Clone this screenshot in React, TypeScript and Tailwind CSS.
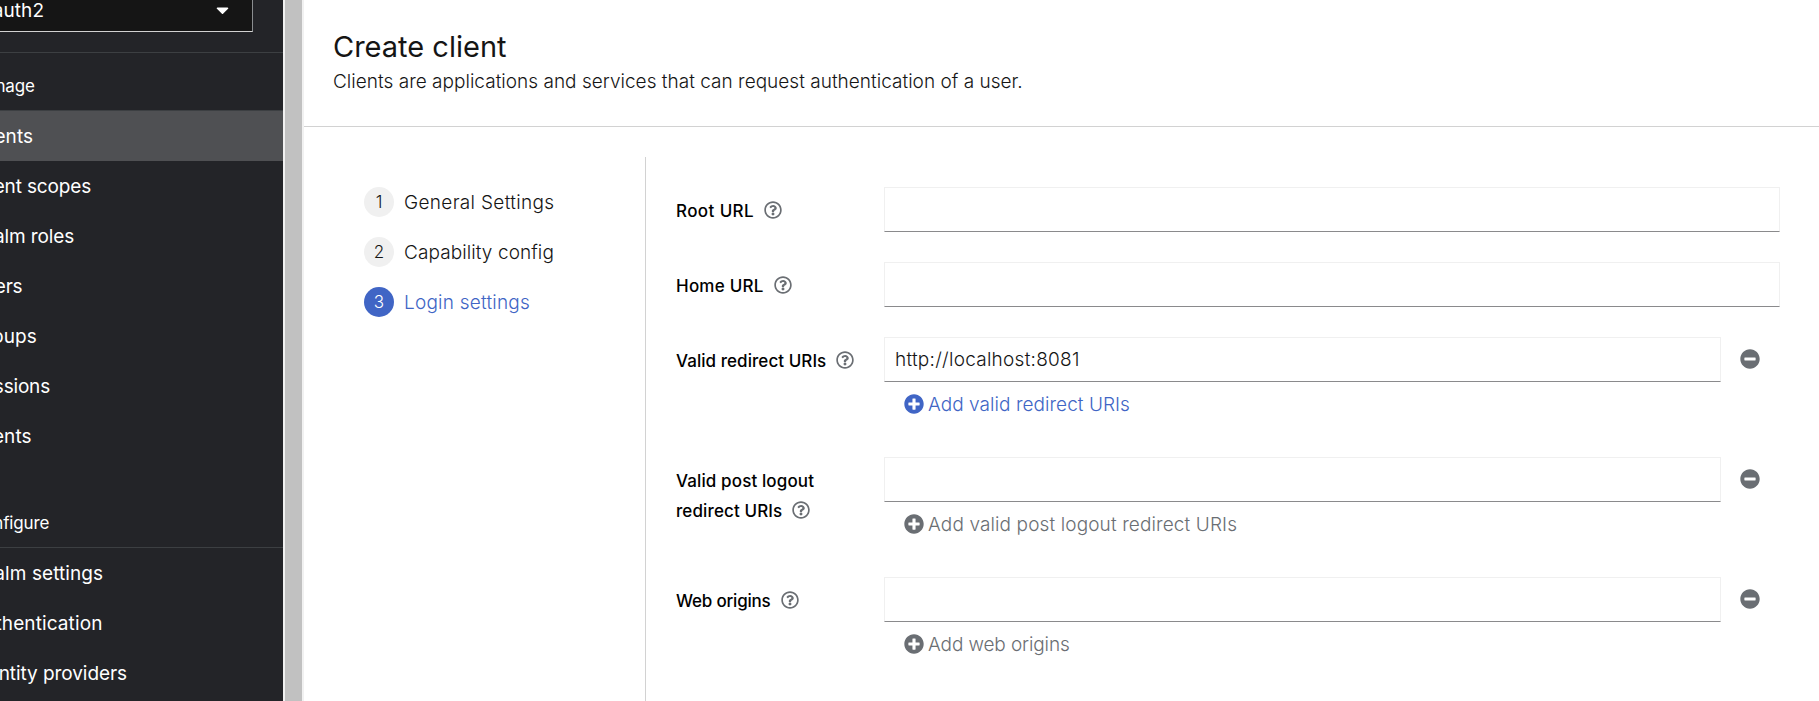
import type { ReactNode } from 'react';
import { FaCaretDown, FaMinusCircle, FaPlusCircle, FaRegQuestionCircle } from 'react-icons/fa';

function NavItem({ label, active = false, tracking = '' }: { label: string; active?: boolean; tracking?: string }) {
  return (
    <a
      className={`flex h-[50px] items-center pt-[2px] pl-[30px] text-[19px] whitespace-nowrap text-white ${tracking} ${active ? 'bg-[#4f5053]' : ''}`}
    >
      {label}
    </a>
  );
}

function NavTitle({ label, tracking = '' }: { label: string; tracking?: string }) {
  return (
    <h2 className={`flex h-[58px] items-end border-b border-[#3c3f42] pb-[11px] pl-[30px] text-[17px] leading-[26px] text-white ${tracking}`}>
      {label}
    </h2>
  );
}

function Sidebar() {
  return (
    <aside className="w-[283px] shrink-0 overflow-hidden bg-[#232428]">
      <div className="-ml-[59px] flex w-[342px] flex-col">
        <div className="h-[53px] border-b border-[#3c3f42]">
          <button className="ml-[30px] flex h-8 w-[282px] items-center justify-between border-r border-b border-r-[#8a8d90] border-b-[#d2d2d2] bg-[#151515] pr-[22px] pb-[10px] pl-[10px] text-[19px] leading-5 text-white">
            <span className="tracking-[0.1px]">oauth2</span>
            <FaCaretDown className="mb-[2px] h-5 w-[15px]" />
          </button>
        </div>
        <NavTitle label="Manage" tracking="tracking-[-0.2px]" />
        <nav>
          <NavItem label="Clients" active tracking="tracking-[0.1px]" />
          <NavItem label="Client scopes" tracking="tracking-[-0.14px]" />
          <NavItem label="Realm roles" tracking="tracking-[-0.12px]" />
          <NavItem label="Users" tracking="tracking-[-0.2px]" />
          <NavItem label="Groups" tracking="tracking-[0.1px]" />
          <NavItem label="Sessions" tracking="tracking-[-0.2px]" />
          <NavItem label="Events" tracking="tracking-[0.1px]" />
        </nav>
        <div className="pt-[29px]">
          <NavTitle label="Configure" tracking="tracking-[-0.15px]" />
          <NavItem label="Realm settings" tracking="tracking-[0.08px]" />
          <NavItem label="Authentication" tracking="tracking-[0.1px]" />
          <NavItem label="Identity providers" tracking="tracking-[-0.06px]" />
        </div>
      </div>
    </aside>
  );
}

function Step({ n, label, current = false, tracking = '' }: { n: number; label: string; current?: boolean; tracking?: string }) {
  return (
    <li className="flex h-[30px] items-center gap-[10px]">
      <span className={`flex size-[30px] items-center justify-center rounded-full pt-px text-[17px] ${current ? 'bg-[#4065c5] text-white' : 'bg-[#f0f0f0]'}`}>
        {n}
      </span>
      <span className={`pt-[2px] text-[19px] whitespace-nowrap ${tracking} ${current ? 'text-[#4065c5]' : ''}`}>{label}</span>
    </li>
  );
}

function Help() {
  return <FaRegQuestionCircle className="ml-[10px] inline-block size-[18px] align-[-2px] text-[#6a6e73]" />;
}

function Row({ label, children, height, tracking = '' }: { label: ReactNode; children: ReactNode; height: string; tracking?: string }) {
  return (
    <div className={`flex ${height}`}>
      <label className={`w-[208px] shrink-0 pt-[9px] text-[17px] leading-[30px] font-medium whitespace-nowrap text-black ${tracking}`}>{label}</label>
      <div className="flex-1">{children}</div>
    </div>
  );
}

function Field({ value = '' }: { value?: string }) {
  return (
    <div className="flex h-[45px] flex-1 items-center border border-[#f0f0f0] border-b-[#8a8a8c] pt-[2px] pl-[10px] text-[19px] tracking-[0.26px]">
      {value}
    </div>
  );
}

function MultiField({ value, add, enabled = false, tracking = '' }: { value?: string; add: string; enabled?: boolean; tracking?: string }) {
  return (
    <>
      <div className="flex">
        <Field value={value} />
        <button className="flex w-[59px] pt-3 pl-[19px] text-[#6a6e73]">
          <FaMinusCircle className="size-5" />
        </button>
      </div>
      <button className={`mt-2 flex h-[30px] items-center gap-1 pt-px pl-5 text-[19px] whitespace-nowrap ${tracking} ${enabled ? 'text-[#4065c5]' : 'text-[#6a6e73]'}`}>
        <FaPlusCircle className="mb-[4px] size-5" />
        {add}
      </button>
    </>
  );
}

export default function App() {
  return (
    <div className="flex h-[701px] w-full overflow-hidden bg-white font-['Inter','Liberation_Sans',sans-serif] font-light text-[#151515] [&_aside]:font-normal">
      <Sidebar />
      <div className="w-[21px] shrink-0 border-x-2 border-[#f1f1f1] bg-[#c1c1c1]" />
      <main className="flex min-w-0 flex-1 flex-col">
        <header className="h-[127px] shrink-0 border-b border-[#d2d2d2] pt-[27px] pl-[30px]">
          <h1 className="-ml-px text-[29px] leading-[39px] font-normal">Create client</h1>
          <p className="-ml-px pt-px text-[19px] leading-[30px] tracking-[0.02px]">Clients are applications and services that can request authentication of a user.</p>
        </header>
        <div className="flex flex-1 pt-[30px]">
          <ol className="flex w-[342px] shrink-0 flex-col gap-5 border-r border-[#d2d2d2] pt-[30px] pl-[60px]">
            <Step n={1} label="General Settings" tracking="tracking-[0.33px]" />
            <Step n={2} label="Capability config" tracking="tracking-[0.08px]" />
            <Step n={3} label="Login settings" current tracking="tracking-[0.22px]" />
          </ol>
          <form className="flex-1 pt-[30px] pr-[39px] pl-[30px]">
            <Row height="h-[75px]" label={<>Root URL<Help /></>} tracking="tracking-[0.4px]">
              <Field />
            </Row>
            <Row height="h-[75px]" label={<>Home URL<Help /></>} tracking="tracking-[0.22px]">
              <Field />
            </Row>
            <Row height="h-[120px]" label={<>Valid redirect URIs<Help /></>} tracking="tracking-[0.06px]">
              <MultiField value="http://localhost:8081" add="Add valid redirect URIs" enabled tracking="tracking-[0.05px]" />
            </Row>
            <Row height="h-[120px]" label={<>Valid post logout<br />redirect URIs<Help /></>} tracking="tracking-[0.12px]">
              <MultiField add="Add valid post logout redirect URIs" tracking="tracking-[0.12px]" />
            </Row>
            <Row height="h-[120px]" label={<>Web origins<Help /></>} tracking="tracking-[-0.2px]">
              <MultiField add="Add web origins" tracking="tracking-[-0.12px]" />
            </Row>
          </form>
        </div>
      </main>
    </div>
  );
}
